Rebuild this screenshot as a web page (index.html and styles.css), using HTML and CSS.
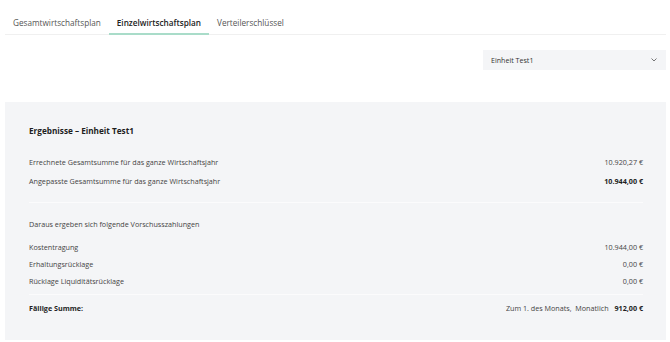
FILE: index.html
```html
<!DOCTYPE html>
<html lang="de">
<head>
    <meta charset="UTF-8">
    <title>Einzelwirtschaftsplan</title>
    <link rel="stylesheet" href="styles.css">
</head>
<body>
    <div class="page">
        <nav class="tabs">
            <div class="tab">Gesamtwirtschaftsplan</div>
            <div class="tab active">Einzelwirtschaftsplan</div>
            <div class="tab">Verteilerschlüssel</div>
        </nav>

        <div class="toolbar">
            <div class="select">
                <span>Einheit Test1</span>
                <svg width="6" height="4" viewBox="0 0 6 4"><path d="M0.5 0.5l2.5 2.5 2.5-2.5" fill="none" stroke="#666" stroke-width="0.9"/></svg>
            </div>
        </div>

        <section class="results">
            <h3>Ergebnisse – Einheit Test1</h3>

            <div class="group">
                <div class="row tall"><span>Errechnete Gesamtsumme für das ganze Wirtschaftsjahr</span><span>10.920,27 €</span></div>
                <div class="row tall"><span>Angepasste Gesamtsumme für das ganze Wirtschaftsjahr</span><strong>10.944,00 €</strong></div>
            </div>

            <div class="group second">
                <p class="intro">Daraus ergeben sich folgende Vorschusszahlungen</p>
                <div class="row"><span>Kostentragung</span><span>10.944,00 €</span></div>
                <div class="row"><span>Erhaltungsrücklage</span><span>0,00 €</span></div>
                <div class="row"><span>Rücklage Liquiditätsrücklage</span><span>0,00 €</span></div>
            </div>

            <div class="row total">
                <strong>Fällige Summe:</strong>
                <span>Zum 1. des Monats,&nbsp; Monatlich <strong class="amount">912,00 €</strong></span>
            </div>
        </section>
    </div>
</body>
</html>
```

FILE: styles.css
```css
* {
    margin: 0;
    padding: 0;
    box-sizing: border-box;
}

body {
    font-family: 'Open Sans', sans-serif;
    color: #444;
    background: white;
}

.page {
    padding: 0 4px 0 5px;
}

.tabs {
    display: flex;
    border-bottom: 1px solid #f0f0f0;
}

.tab {
    padding: 17px 8px 4px;
    font-size: 8.2px;
    line-height: 12px;
    color: #555;
    border-bottom: 2px solid transparent;
    margin-bottom: -1px;
}

.tab.active {
    color: #222;
    font-weight: 600;
    border-bottom-color: #a9dcc9;
}

.toolbar {
    display: flex;
    justify-content: flex-end;
    margin-top: 15px;
}

.select {
    width: 183px;
    height: 20px;
    background: #f4f5f7;
    display: flex;
    align-items: center;
    justify-content: space-between;
    padding: 0 9px 0 8px;
    font-size: 7.1px;
    color: #333;
}

.results {
    margin-top: 32px;
    background: #f4f5f7;
    padding: 22px 23px 23px 24px;
    font-size: 7.2px;
}

.results h3 {
    font-size: 8.2px;
    line-height: 14px;
    color: #1e1e1e;
    font-weight: 700;
    margin-bottom: 15px;
}

.row {
    display: flex;
    justify-content: space-between;
    line-height: 17px;
}

.row.tall {
    line-height: 19px;
}

.row strong {
    color: #1e1e1e;
    font-weight: 700;
}

.group {
    padding-bottom: 11px;
    border-bottom: 1px solid #fbfbfc;
}

.group.second {
    padding-top: 12px;
    padding-bottom: 4px;
}

.intro {
    line-height: 19px;
    margin-bottom: 5px;
}

.total {
    margin-top: 5px;
}

.total .amount {
    margin-left: 4px;
}
```
